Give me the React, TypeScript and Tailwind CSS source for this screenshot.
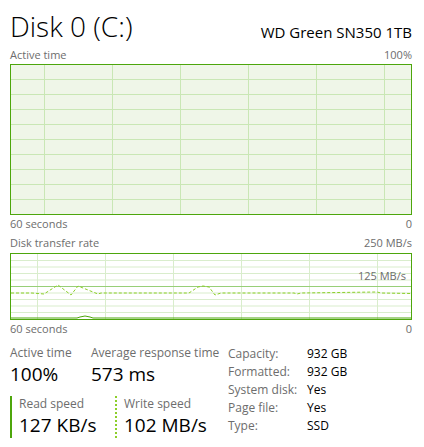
import React from 'react';

const FONT = { fontFamily: '"Segoe UI", "Open Sans", "Noto Sans", sans-serif' };

const topRows = [14, 29, 44, 59, 74, 89, 104, 119, 134];
const topCols = [33, 101, 169, 237, 305, 373];
const rateRows = [6.5, 13, 19.5, 26, 39, 45.5, 52, 58.5];
const rateCols = [26, 94, 162, 230, 298, 366];

const writeLine =
  '0,39 21,39 33,40 47,31 60,41 67,32 87,40 90,39 178,39 187,33 192,32 198,33 204,41 210,39 283,39 286,40 290,39 366,38 370,39 400,39.5';
const readLine = '0,64 66,64 69,63 74,62 79,63 82,64 400,64';

const ActiveGraph: React.FC = () => (
  <div className="h-[151px] w-[402px] border border-[#4da60c] bg-[#eff6e8]">
    <svg width="400" height="149" className="block">
      {topRows.map((y) => (
        <line key={y} x1="0" x2="400" y1={y + 0.5} y2={y + 0.5} stroke="#c9e7b5" />
      ))}
      {topCols.map((x) => (
        <line key={x} x1={x + 0.5} x2={x + 0.5} y1="0" y2="149" stroke="#c9e7b5" />
      ))}
    </svg>
  </div>
);

const RateGraph: React.FC = () => (
  <div className="relative h-[67px] w-[402px] border border-[#4da60c] bg-white">
    <svg width="400" height="65" className="block">
      {rateRows.map((y) => (
        <line key={y} x1="0" x2="400" y1={y} y2={y} stroke="#d9edcc" />
      ))}
      {rateCols.map((x) => (
        <line key={x} x1={x + 0.5} x2={x + 0.5} y1="0" y2="65" stroke="#d9edcc" />
      ))}
      <line x1="0" x2="400" y1="32.5" y2="32.5" stroke="#98cf78" />
      <polyline points={readLine} fill="none" stroke="#4da60c" strokeWidth="1" />
      <polyline points={writeLine} fill="none" stroke="#8ccf2a" strokeWidth="1" strokeDasharray="3 2" />
    </svg>
    <span className="absolute right-[5px] top-[15px] text-[11px] leading-[14px] text-[#6d6d6d]">125 MB/s</span>
  </div>
);

const Stat: React.FC<{ label: string; value: string }> = ({ label, value }) => (
  <div className="flex flex-col">
    <span className="text-[12px] leading-[16px] text-[#6d6d6d]">{label}</span>
    <span className="text-[19px] leading-[26px] text-black">{value}</span>
  </div>
);

const props: [string, string][] = [
  ['Capacity:', '932 GB'],
  ['Formatted:', '932 GB'],
  ['System disk:', 'Yes'],
  ['Page file:', 'Yes'],
  ['Type:', 'SSD'],
];

export default function App() {
  return (
    <div className="h-[447px] w-[424px] overflow-hidden bg-white pl-[10px] pr-[12px]" style={FONT}>
      <div className="flex h-[47px] items-end justify-between">
        <span className="mb-[1px] text-[28px] font-light leading-[40px] text-black">Disk 0 (C:)</span>
        <span className="mb-[5px] text-[15px] leading-[20px] text-black">WD Green SN350 1TB</span>
      </div>
      <div className="flex h-[17px] items-center justify-between text-[11px] text-[#6d6d6d]">
        <span>Active time</span>
        <span>100%</span>
      </div>
      <ActiveGraph />
      <div className="flex h-[19px] items-center justify-between text-[11px] text-[#6d6d6d]">
        <span>60 seconds</span>
        <span>0</span>
      </div>
      <div className="flex h-[19px] items-center justify-between text-[11px] text-[#6d6d6d]">
        <span>Disk transfer rate</span>
        <span>250 MB/s</span>
      </div>
      <RateGraph />
      <div className="flex h-[19px] items-center justify-between text-[11px] text-[#6d6d6d]">
        <span>60 seconds</span>
        <span>0</span>
      </div>
      <div className="mt-[6px] flex">
        <div className="flex w-[218px] flex-col">
          <div className="flex">
            <div className="w-[81px]">
              <Stat label="Active time" value="100%" />
            </div>
            <Stat label="Average response time" value="573 ms" />
          </div>
          <div className="mt-[9px] flex">
            <div className="w-[105px] border-l-2 border-[#4da60c] pl-[7px]">
              <Stat label="Read speed" value="127 KB/s" />
            </div>
            <div className="border-l-2 border-dotted border-[#8ccf2a] pl-[7px]">
              <Stat label="Write speed" value="102 MB/s" />
            </div>
          </div>
        </div>
        <div className="flex flex-col text-[12px] leading-[18px]">
          {props.map(([k, v]) => (
            <div key={k} className="flex">
              <span className="w-[79px] text-[#6d6d6d]">{k}</span>
              <span className="text-black">{v}</span>
            </div>
          ))}
        </div>
      </div>
    </div>
  );
}
